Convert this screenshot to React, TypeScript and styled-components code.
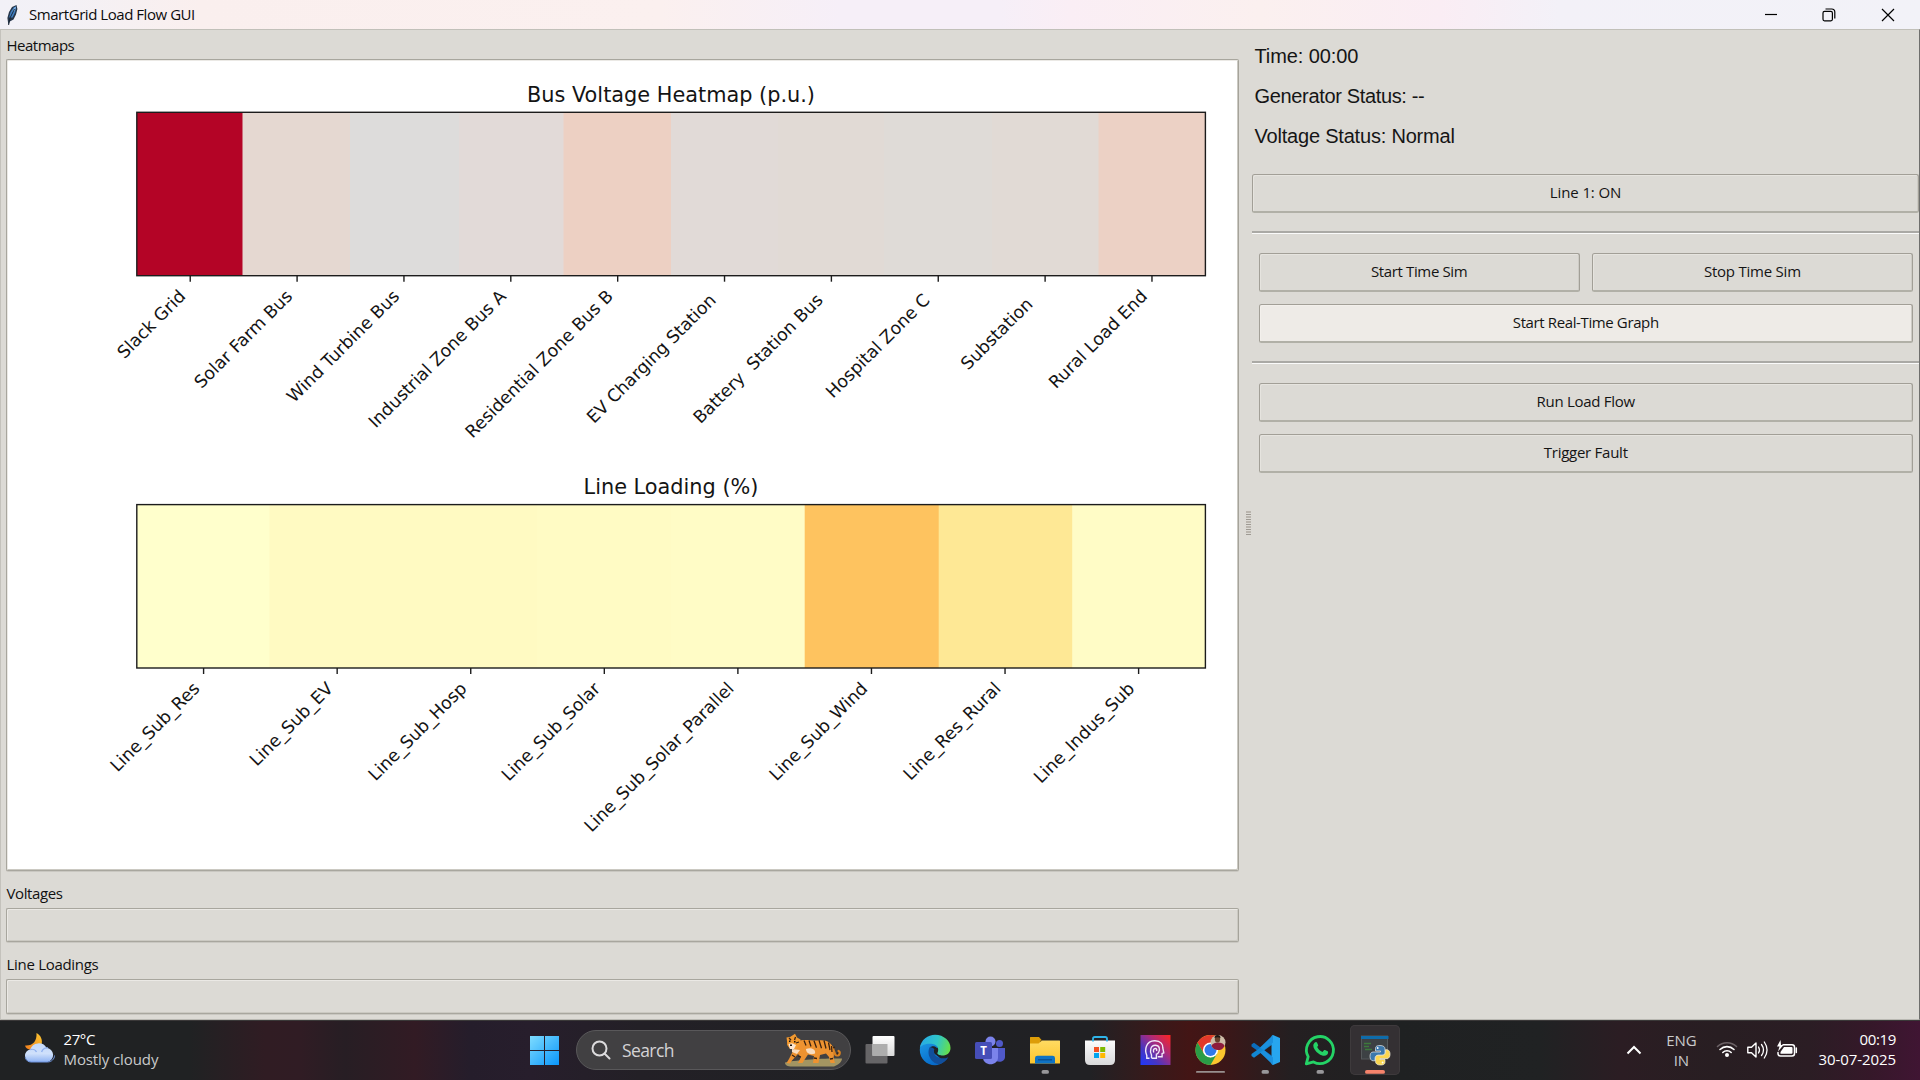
import React from "react";
import styled, { createGlobalStyle } from "styled-components";

const UI = '"Open Sans", "Noto Sans", sans-serif';
const FACE = "#dcdad5";

const Global = createGlobalStyle`
  * { box-sizing: border-box; }
  html, body { margin: 0; padding: 0; overflow: hidden; background: ${FACE}; }
`;

const Screen = styled.div`
  width: 1920px;
  height: 1080px;
  display: flex;
  flex-direction: column;
  overflow: hidden;
  font-family: ${UI};
  font-size: 15px;
  color: #111;
`;

const Text = styled.span<{ $track?: number }>`
  letter-spacing: ${(p) => p.$track ?? 0}px;
  white-space: pre;
`;

/* ---------- title bar ---------- */
const TitleBar = styled.header`
  height: 29px;
  flex: none;
  display: flex;
  align-items: center;
  line-height: 29px;
  padding-left: 6px;
  color: #0c0c0c;
  background: linear-gradient(90deg, #f2f1f7 0, #f3f1f6 60px, #faefee 200px, #fbf0ef 660px, #f6eff8 840px, #f6eff8 1000px, #faeef5 1070px, #fbf0ef 1260px, #faedf4 1440px, #f3f1f8 1560px, #f2f2f8 1920px);
`;
const TitleText = styled(Text)`
  margin-left: 9px;
`;
const Caption = styled.div`
  margin-left: auto;
  height: 29px;
  display: grid;
  grid-template-columns: repeat(3, 58.5px);
  place-items: center;
  padding-right: 3px;
`;

/* ---------- window body ---------- */
const Body = styled.main`
  height: 991px;
  flex: none;
  display: flex;
  background: ${FACE};
  border-top: 1px solid #c1c0b9;
  border-left: 1px solid #c4c2bc;
  border-right: 1px solid #6f6f6d;
  border-bottom: 1px solid #b9b8b2;
`;
const Plots = styled.section`
  width: 1238px;
  padding-left: 5px;
  display: flex;
  flex-direction: column;
`;
const GroupLabel = styled.div<{ $h: number; $lh: number }>`
  height: ${(p) => p.$h}px;
  line-height: ${(p) => p.$lh}px;
  padding-left: 0.5px;
  flex: none;
`;
const Frame = styled.div<{ $h: number; $fill?: string }>`
  height: ${(p) => p.$h}px;
  flex: none;
  background: ${(p) => p.$fill ?? FACE};
  border: 1px solid #a8a69e;
  border-right-color: #a5a39b;
  border-radius: 2px;
  box-shadow: inset 1px 1px 0 #ebe9e5, inset -1px -1px 0 #cbc9c2, 0 1px 0 #c9c7c1;
`;
const Sash = styled.div`
  width: 13px;
  padding-left: 7px;
`;
const Grip = styled.i`
  display: block;
  width: 5px;
  height: 25px;
  margin-top: 481px;
  background: repeating-linear-gradient(180deg, #bab5ae 0 2px, ${FACE} 2px 3px, #9e9a93 3px 4px, ${FACE} 4px 5px);
`;

/* ---------- control panel ---------- */
const Controls = styled.section`
  flex: 1;
  display: flex;
  flex-direction: column;
  padding-top: 6px;
`;
const Status = styled.div`
  height: 40px;
  line-height: 40px;
  padding-left: 2.5px;
  font-family: "Liberation Sans", Arial, sans-serif;
  font-size: 20px;
  color: #151515;
`;
const Button = styled.button<{ $active?: boolean }>`
  flex: 1;
  height: 39px;
  padding: 0 0 2px;
  border: 1px solid #a29f97;
  border-bottom: 2px solid #b1b0a7;
  border-radius: 2.5px;
  background: ${(p) => (p.$active ? "#eeebe7" : FACE)};
  box-shadow: inset 1px 1px 0 ${(p) => (p.$active ? "#f3f0ec" : "#e6e4df")}, inset -1px 0 0 #cdcbc5;
  font: 15px/34px ${UI};
  color: #141414;
`;
const ButtonRow = styled.div<{ $inset?: boolean; $top: number }>`
  display: flex;
  gap: 12px;
  margin-top: ${(p) => p.$top}px;
  padding: ${(p) => (p.$inset ? "0 6px 0 6.5px" : "0")};
`;
const Rule = styled.hr`
  width: 100%;
  height: 3px;
  margin: 18px 0 0;
  border: 0;
  border-top: 2px solid #aaa9a5;
  border-bottom: 1px solid #fafafa;
`;

/* ---------- taskbar ---------- */
const Taskbar = styled.footer`
  height: 60px;
  flex: none;
  display: grid;
  grid-template-columns: 517.5px 56.5px 278px 1fr auto;
  border-top: 1px solid #3a3838;
  color: #fff;
  background: linear-gradient(90deg, #202223 0, #202223 190px, #301c23 265px, #301c24 300px, #271e24 345px, #321b24 415px, #251d2b 470px, #271e2c 530px, #232026 640px, #202124 850px, #212124 1090px, #371a1b 1150px, #431515 1190px, #3b1718 1225px, #241f21 1290px, #1f2122 1400px, #202223 1540px, #2b1d23 1620px, #281e22 1720px, #2b1d24 1810px, #351829 1870px, #401533 1920px);
`;
const Weather = styled.div`
  display: flex;
  gap: 8px;
  padding: 11px 0 0 22.5px;
`;
const Lines = styled.div<{ $align?: string }>`
  display: flex;
  flex-direction: column;
  text-align: ${(p) => p.$align ?? "left"};
  line-height: 20px;
  margin-top: -3px;
`;
const Muted = styled(Text)`
  color: #c9cacb;
`;
const Slot = styled.div<{ $lit?: boolean }>`
  width: 50px;
  height: 50px;
  margin: 4px 2.5px 0;
  border-radius: 5px;
  background: ${(p) => (p.$lit ? "#343033" : "transparent")};
  box-shadow: ${(p) => (p.$lit ? "inset 0 0 0 1px #3e3a3c" : "none")};
  svg { display: block; }
`;
const SearchBox = styled.div`
  width: 275px;
  height: 40px;
  margin: 9px 0 0 2px;
  padding: 0 6px 0 13.5px;
  display: flex;
  align-items: center;
  border-radius: 20px;
  border: 1px solid #59585a;
  background: #414042;
  font-size: 17.5px;
  color: #d4d3d5;
`;
const SearchText = styled(Text)`
  margin-left: 11.5px;
  flex: 1;
`;
const Apps = styled.div`
  display: flex;
`;
const Tray = styled.div`
  display: flex;
  padding-right: 24px;
`;
const TrayIcons = styled.div`
  padding-top: 11px;
  width: 119px;
`;
const Clock = styled.div`
  padding-top: 11px;
`;
const Lang = styled(Lines)`
  width: 36px;
  margin-top: 9px;
`;

/* ---------- data ---------- */
const NB = "\u00a0";
const buses: [string, string][] = [
  ["Slack Grid", "#b40426"],
  ["Solar Farm Bus", "#e5d8d1"],
  ["Wind Turbine Bus", "#dddcdb"],
  ["Industrial Zone Bus A", "#e2dad8"],
  ["Residential Zone Bus B", "#edd0c3"],
  ["EV Charging Station" + NB, "#e1dad7"],
  ["Battery" + NB + NB + "Station Bus" + NB, "#e1dad5"],
  ["Hospital Zone C" + NB, "#dfdbd7"],
  ["Substation" + NB + NB, "#e1dad5"],
  ["Rural Load End", "#ecd1c5"],
];
const lines: [string, string][] = [
  ["Line_Sub_Res", "#ffffcc"],
  ["Line_Sub_EV", "#fffac2"],
  ["Line_Sub_Hosp", "#fffac2"],
  ["Line_Sub_Solar", "#fffbc4"],
  ["Line_Sub_Solar_Parallel", "#fffcc6"],
  ["Line_Sub_Wind", "#fec35f"],
  ["Line_Res_Rural", "#fee895"],
  ["Line_Indus_Sub", "#fffcc6"],
];

const X0 = 136.8;
const X1 = 1205.4;

interface AxesProps {
  title: string;
  titleY: number;
  cells: [string, string][];
  edges: number[];
  top: number;
  labelDx: number;
}

function Axes({ title, titleY, cells, edges, top, labelDx }: AxesProps) {
  const h = 163.4;
  const w = (X1 - X0) / cells.length;
  return (
    <g fontFamily='"DejaVu Sans", sans-serif' fill="#141414">
      <text x={671} y={titleY} fontSize="20.83" textAnchor="middle">{title}</text>
      {cells.map(([name, color], i) => (
        <rect key={name} x={edges[i]} y={top} width={X1 - edges[i]} height={h} fill={color} />
      ))}
      <rect x={X0} y={top} width={X1 - X0} height={h} fill="none" stroke="#1c1c1c" strokeWidth="1.4" />
      {cells.map(([name], i) => {
        const cx = X0 + (i + 0.5) * w;
        return (
          <g key={name}>
            <path d={`M${cx} ${top + h}v6`} stroke="#1c1c1c" strokeWidth="1.4" />
            <text fontSize="17.36" textAnchor="end" transform={`translate(${cx - labelDx} ${top + h + 21.6}) rotate(-45)`}>{name}</text>
          </g>
        );
      })}
    </g>
  );
}

const Figure = () => (
  <svg width="1230" height="808" viewBox="7 60 1230 808" style={{ display: "block" }}>
    <Axes title="Bus Voltage Heatmap (p.u.)" titleY={101.7} cells={buses} top={112.3} labelDx={3.6}
      edges={[137, 242.5, 350, 459, 563.5, 671, 778, 884, 992, 1098.5]} />
    <Axes title="Line Loading (%)" titleY={493.6} cells={lines} top={504.6} labelDx={3}
      edges={[137, 269.5, 404, 537, 671, 804.7, 938.7, 1072.2]} />
  </svg>
);

/* ---------- icons ---------- */
const Feather = () => (
  <svg width="14" height="22" viewBox="0 0 14 22">
    <path d="M2.400 21 1.400 14 3 8 6 3 10.500 1 11.400 5 10 10.500 7.500 15.500 3.800 17.500z" fill="#26364a" />
    <path d="M3.200 13.500 4.600 8 7.600 3.400 10.200 2.200 9.200 8 6.500 13.600z" fill="#4180c4" />
    <path d="M6.500 7.500 8.600 3.600 10.100 2.800 8.500 7z" fill="#8fbce8" />
    <path d="M2.600 21 4 14 8.500 5" stroke="#14202e" strokeWidth=".9" fill="none" />
  </svg>
);

const WeatherIcon = () => (
  <svg width="33" height="32" viewBox="0 0 33 32">
    <defs>
      <linearGradient id="moon" x1="0" y1="1" x2="1" y2="0"><stop offset="0" stopColor="#f27c1c" /><stop offset="1" stopColor="#fbc932" /></linearGradient>
      <linearGradient id="cloud" x1="0" y1="0" x2="0" y2="1"><stop offset="0" stopColor="#c4d9fa" /><stop offset=".55" stopColor="#cfe0fb" /><stop offset="1" stopColor="#8fb3f3" /></linearGradient>
    </defs>
    <path d="M13.500 1C18 3.500 20 8 18.400 13.500 17 18 10 19.500 5 17 3 16 2 14.500 2.200 13.500 10 14 14 9 13.500 1z" fill="url(#moon)" />
    <path d="M8 30a6.300 6.300 0 0 1-.8-12.500A9 9 0 0 1 23.500 15.800 7.200 7.200 0 0 1 24.500 30z" fill="url(#cloud)" />
    <path d="M7.200 17.500c3-.8 5.500.8 6.300 2.500M18.600 20c1-2.800 3.600-4.500 6.400-4.100" stroke="#8fb0ee" strokeWidth="1.300" fill="none" />
    <path d="M2.300 25.500C3 28.500 5.500 30 8 30h16.500c4 0 7-3 7-6.500" stroke="#7096e0" strokeWidth="1" fill="none" />
  </svg>
);

const Tiger = () => (
  <svg width="60" height="36" viewBox="0 0 60 36">
    <path d="M1 30.500C10 28 40 26 58 26.500 58 30 54 33 50 34.500H8C3 34.500 1 33 1 30.500z" fill="#a39562" />
    <path d="M47 14c5 4 2 9 6 9.500 3 0 3.500-3.500 1.500-4.500" stroke="#d9801f" strokeWidth="2.200" fill="none" strokeLinecap="round" />
    <path d="M14 9C20 7 28 9 34 8.500 42 7 48 11 49 16 49.500 20 50.500 23 49.500 26L51 31H46.500L45 25 42 21.500 36 23 34.500 31H29L30 24 24 22.500 21 27 18.500 31H14L17 25 14 22 8 28.500 6 31.500 2.500 31 5 27 9 19z" fill="#ee9230" />
    <path d="M22 17C28 15 32 18 31 21.500 26 23.500 22 21 22 17zM8 17 16 18 13 22 8 20z" fill="#f8dcc0" />
    <path d="M2.500 5.500 6 5 11 1.800 13 5.500 16.500 7.500 15.500 13 12 17 6 17 3.200 13 3 9z" fill="#f39a30" />
    <path d="M4.500 12 8 11.200 12 13 10 17 6 17z" fill="#fbe6d2" />
    <g stroke="#3a2210" strokeWidth="1.300" fill="none">
      <path d="M20 8.500l2 5M25 8.500l2 6M30 8.700l2.500 7M35 8.300l2.500 8M40 8.500l2 8M44.500 10.500l1.500 7.500M47.500 14l.5 6M5 6l2 2M11.500 5l-1 3M15 10l-3 1M14 24l3 1M30 26l3 .5M46 27l3-.5M53 22.500l1-2M8 23l3 2M49 16l2-1" />
    </g>
    <path d="M5 9.200h1.500M10 9.700h1.500M6 13.200h2" stroke="#1b120c" strokeWidth="1.500" />
  </svg>
);

const Sq = ({ children }: { children: React.ReactNode }) => (
  <svg width="50" height="50" viewBox="0 0 50 50">{children}</svg>
);

const Start = () => (
  <Sq>
    <defs><linearGradient id="win" x1="0" y1="0" x2="1" y2="1"><stop offset="0" stopColor="#7edcff" /><stop offset="1" stopColor="#0a96fb" /></linearGradient></defs>
    <path d="M10 11h14v14H10zM25 11h14v14H25zM10 26h14v14H10zM25 26h14v14H25z" fill="url(#win)" />
  </Sq>
);
const TaskView = () => (
  <Sq>
    <defs><linearGradient id="tv" x2="0" y2="1"><stop stopColor="#fff" /><stop offset="1" stopColor="#d9d9d9" /></linearGradient></defs>
    <rect x="10.500" y="19" width="22" height="19.500" rx="1" fill="#666567" />
    <rect x="17.500" y="11" width="22" height="20" rx="1" fill="url(#tv)" />
    <path d="M17.500 19h15v12h-15z" fill="#adadad" />
  </Sq>
);
const Edge = () => (
  <Sq>
    <defs>
      <linearGradient id="e1" x1="0" y1=".3" x2="1" y2=".5"><stop stopColor="#27a9e8" /><stop offset=".55" stopColor="#2fc6c8" /><stop offset="1" stopColor="#65df4c" /></linearGradient>
      <linearGradient id="e2" x1="0" y1="0" x2=".6" y2="1"><stop stopColor="#1e9ce6" /><stop offset="1" stopColor="#0669c9" /></linearGradient>
    </defs>
    <path d="M9.800 25C10 16 17 13 24 15.500L28 22 24 28 34 36.500C31 39 28 40.200 25 40.200 16.500 40.200 9.800 33.500 9.800 25z" fill="url(#e2)" />
    <path d="M9.800 23C11 14.500 18 9.700 25 9.700c9 0 15.500 6.500 15.500 13.300 0 5-3.800 7.500-8 7.500-3.800 0-6-1.300-5-3 1.800-3 .3-7.500-4.800-8.500C17.500 18 11.500 19.500 9.800 23z" fill="url(#e1)" />
    <path d="M19.500 22.500c-3.500 8 3 16.500 10 16.700 4-1.200 7.200-3.900 8.800-7-5.500 2.500-13 1-14.300-4.500-.3-1.700.2-3 1.200-4.200-2-2.500-4.500-2.500-5.700-1z" fill="#114f9c" />
    <path d="M20.500 22.500c2.500-2.500 6.500-1 7.200 2 .2 1.300-.2 2.300-.5 3-.7 1.500 1.500 2.800 4.300 3-3 1-7-.5-7.500-3.500-.2-1.200 0-2 .3-2.800-1-1.500-2.500-2-3.800-1.700z" fill="#202124" />
  </Sq>
);
const Teams = () => (
  <Sq>
    <circle cx="25.500" cy="16.500" r="5" fill="#7b83eb" />
    <circle cx="34.500" cy="18.500" r="3.500" fill="#5059c9" />
    <path d="M31 23h9v9c0 4-5 6-9 4z" fill="#5059c9" />
    <path d="M18 23h15v9.500c0 9-15 9-15 0z" fill="#7b83eb" />
    <rect x="10" y="17" width="17" height="17" rx="1.500" fill="#464eb8" />
    <text x="18.500" y="29.500" fontSize="11.500" fontWeight="700" fontFamily="Open Sans, sans-serif" fill="#fff" textAnchor="middle">T</text>
  </Sq>
);
const Explorer = () => (
  <Sq>
    <defs><linearGradient id="fo" x2="0" y2="1"><stop stopColor="#ffdb62" /><stop offset="1" stopColor="#fcc52e" /></linearGradient></defs>
    <path d="M10 12.500q0-.5.500-.5h8.500l3 3.500h-1.500v5H10z" fill="#dd9d08" />
    <path d="M10 18.500h8.500l3.500-3H39.500q.5 0 .5.500V38q0 .5-.5.500h-29q-.5 0-.5-.5z" fill="url(#fo)" />
    <path d="M15 38.500V33q0-2.300 2.500-2.300h15Q35 30.700 35 33v5.500z" fill="#0f73c4" />
    <path d="M18 34.800h14" stroke="#0a4c8c" strokeWidth="1.200" />
    <rect x="21.500" y="45" width="7.500" height="3.800" rx="1.900" fill="#98979a" />
  </Sq>
);
const Store = () => (
  <Sq>
    <defs><linearGradient id="st" x2="0" y2="1"><stop stopColor="#fcfcfc" /><stop offset="1" stopColor="#d9d9da" /></linearGradient></defs>
    <path d="M10 15.500h30V35q0 5-5 5H15q-5 0-5-5z" fill="url(#st)" />
    <path d="M18 16.500v-2.700q0-1.800 1.800-1.800h10.400q1.800 0 1.800 1.800v2.700" stroke="#2fb4e9" strokeWidth="1.800" fill="none" />
    <path d="M19 22h5v5h-5z" fill="#f25022" /><path d="M25.200 22h5v5h-5z" fill="#7fba00" />
    <path d="M19 28h5v5h-5z" fill="#00a4ef" /><path d="M25.200 28h5v5h-5z" fill="#ffb900" />
  </Sq>
);
const HeadApp = () => (
  <Sq>
    <defs><linearGradient id="hd" x1="0" y1="1" x2="1" y2="0"><stop stopColor="#1d38fc" /><stop offset=".3" stopColor="#4536c4" /><stop offset=".62" stopColor="#a82b7e" /><stop offset="1" stopColor="#ff2420" /></linearGradient></defs>
    <rect x="10.500" y="10" width="30" height="30" fill="url(#hd)" />
    <path d="M19.500 33.300h-2.700V30.500c-2.500-6-.8-14.500 7.700-14.700 6.500-.2 8.700 4 8.300 7.200l1 4.800-1.700.7v3.200h-4.300M21.500 33v-3c-2-4-1-9.700 3.700-9.700 4.500 0 5 4 3.500 7-.7 1.400-1.700 1.800-2.300 1.800V33.300h-4.900M23.800 27.500c-.8-2-.3-4 1.500-4 1.300 0 1.700 1.200 1.200 2.500" stroke="#f1e8f8" strokeWidth="1.400" fill="none" />
  </Sq>
);
const Chrome = () => (
  <Sq>
    <circle cx="25.500" cy="25" r="15" fill="#fbc62e" />
    <path d="M12.500 17.500A15 15 0 0 1 38.500 17.500H25.500L19 28.700z" fill="#e2392b" />
    <path d="M12.500 17.500A15 15 0 0 0 25.500 40L32 28.700 25.500 32.500 19 28.700z" fill="#2a9c47" />
    <circle cx="25.500" cy="25" r="7.600" fill="#fff" /><circle cx="25.500" cy="25" r="6" fill="#3079ea" />
    <circle cx="33" cy="17.500" r="7.500" fill="#cdbda8" />
    <path d="M26.500 21c1-4 11-5 13 0-2 4-4 4-6.500 4-3 0-5-1.500-6.500-4z" fill="#8d1d3c" />
    <ellipse cx="32.500" cy="14" rx="2.700" ry="3.500" fill="#67402c" />
    <path d="M29.500 13q0-3 3-3t3 3q-3-1.500-6 0z" fill="#1d1512" />
    <rect x="11" y="46" width="29" height="1.800" rx=".9" fill="#98908f" />
  </Sq>
);
const Code = () => (
  <Sq>
    <path d="M11.500 19.500 14 17.800 35 33V38L11.500 21.500z" fill="#0b6dbb" />
    <path d="M11.500 31 14 32.800 35 17.500V12L11.500 29z" fill="#1287d3" />
    <path d="M33 10 40 13V37L33 40 31.500 39V11z" fill="#27a6ef" />
    <path d="M33 10 20 22.500 23.500 25.300 33 17.500zM33 40 20 27.500 23.500 24.700 33 32.500z" fill="#1b90de" />
    <rect x="21.500" y="45" width="7.500" height="3.800" rx="1.900" fill="#98979a" />
  </Sq>
);
const WhatsApp = () => (
  <Sq>
    <path d="M11.300 38.800 13.200 31.700A13.500 13.500 0 1 1 18.500 36.900z" fill="none" stroke="#24d366" strokeWidth="2.800" strokeLinejoin="round" />
    <path d="M19.800 17.500c.8-.8 1.900-.7 2.300.2l1 2.400c.2.500 0 .9-.9 2 .9 2.300 2.900 4 5.200 5l1.600-1.900c.3-.3.700-.4 1-.2l2.600 1.300c.9.500.5 2.300-.3 3.200-2 2-5.200 1.500-8.500-.8-3.300-2.300-5.500-5.500-5.500-8 0-1.200.6-2.300 1.500-3.200z" fill="#24d366" />
    <rect x="21.500" y="45" width="7.500" height="3.800" rx="1.900" fill="#98979a" />
  </Sq>
);
const Python = () => (
  <Sq>
    <rect x="11.500" y="11" width="26" height="23" fill="#3d4144" stroke="#55595b" />
    <path d="M11 11h27.500v3H11z" fill="#0e6cab" />
    <path d="M14 18.500h7M14 21.500h5M15 24.500h7" stroke="#3d7a3b" strokeWidth="1.300" />
    <path d="M30 20.500c-4.600 0-4.500 2-4.500 3.500v2h5v1h-7.500c-2.500 0-3 2.500-3 4.500s1 4.300 3 4.300h2v-2.300c0-2 1.500-3.200 3.500-3.200h4c1.500 0 2.500-1 2.500-2.500V24c0-2-1.500-3.500-5-3.500z" fill="#3b78ac" stroke="#e6e8ea" strokeWidth=".7" />
    <path d="M30.500 40c4.600 0 4.500-2 4.500-3.500v-2h-5v-1h7c2.500 0 3-2.500 3-4.500s-1-4.300-3-4.300h-1.500V27c0 2-1.500 3.200-3.500 3.200h-4c-1.500 0-2.500 1-2.500 2.500v3.800c0 2 1.500 3.500 5 3.500z" fill="#fbd650" stroke="#f3f0e0" strokeWidth=".7" />
    <circle cx="27.700" cy="23" r=".9" fill="#fff" /><circle cx="32.600" cy="37.500" r=".9" fill="#fff" />
    <rect x="15" y="45" width="20" height="3.800" rx="1.900" fill="#f5836b" />
  </Sq>
);

const TrayGlyphs = () => (
  <svg width="110" height="34" viewBox="1700 1032 110 34">
    <g fill="none" stroke="#fff" strokeWidth="1.600" strokeLinecap="round">
      <path d="M1718.500 1046.500a14 14 0 0 1 19 0" stroke="#6c6266" />
      <path d="M1721 1049.500a10 10 0 0 1 14 0M1723.800 1052.500a6 6 0 0 1 8.400 0" />
      <path d="M1748.800 1047.300h3.700l4.500-4.300v14l-4.500-4.300h-3.700z" strokeLinejoin="round" strokeWidth="1.400" />
      <path d="M1759.500 1047q2 3 0 6M1762.500 1044.500q4 5.500 0 11M1765.300 1042q5.500 8 0 16" strokeWidth="1.300" />
      <path d="M1784 1044.700h9q2.500 0 2.500 2.500v6.300q0 2.500-2.500 2.500h-11.500q-2.500 0-2.500-2.500v-1" strokeWidth="1.500" />
      <path d="M1797.300 1048v4.500" strokeWidth="1.500" />
    </g>
    <circle cx="1728" cy="1055" r="2" fill="#fff" />
    <path d="M1785 1047h7.500q1 0 1 1v4.700q0 1-1 1h-11v-1.700zM1781.500 1040 1778 1046.500h2.500l-1.500 5 5.500-6.500h-2.500z" fill="#fff" />
  </svg>
);

export default function App() {
  return (
    <Screen>
      <Global />
      <TitleBar>
        <Feather />
        <TitleText $track={-0.45}>SmartGrid Load Flow GUI</TitleText>
        <Caption>
          <svg width="14" height="14" viewBox="0 0 14 14"><path d="M1 6.500h12" stroke="#000" strokeWidth="1.200" /></svg>
          <svg width="14" height="14" viewBox="0 0 14 14" fill="none" stroke="#000" strokeWidth="1.200">
            <rect x="1" y="3.400" width="9.400" height="9.400" rx="1.500" />
            <path d="M3.500 1h6.200q3.100 0 3.100 3.100V10.500" />
          </svg>
          <svg width="14" height="14" viewBox="0 0 14 14"><path d="M1 1l12 12M13 1 1 13" stroke="#000" strokeWidth="1.200" /></svg>
        </Caption>
      </TitleBar>

      <Body>
        <Plots>
          <GroupLabel $h={29} $lh={30}><Text $track={-0.5}>Heatmaps</Text></GroupLabel>
          <Frame $h={812} $fill="#fff"><Figure /></Frame>
          <GroupLabel $h={37} $lh={44}><Text $track={-0.4}>Voltages</Text></GroupLabel>
          <Frame $h={34} />
          <GroupLabel $h={37} $lh={45}><Text $track={-0.3}>Line Loadings</Text></GroupLabel>
          <Frame $h={35} />
        </Plots>
        <Sash><Grip /></Sash>
        <Controls>
          <Status><Text $track={-0.1}>Time: 00:00</Text></Status>
          <Status><Text $track={-0.34}>Generator Status: --</Text></Status>
          <Status><Text $track={-0.2}>Voltage Status: Normal</Text></Status>
          <ButtonRow $top={18}><Button><Text $track={-0.12}>Line 1: ON</Text></Button></ButtonRow>
          <Rule />
          <ButtonRow $inset $top={19}>
            <Button><Text $track={-0.36}>Start Time Sim</Text></Button>
            <Button><Text $track={-0.22}>Stop Time Sim</Text></Button>
          </ButtonRow>
          <ButtonRow $inset $top={12}><Button $active><Text $track={-0.38}>Start Real-Time Graph</Text></Button></ButtonRow>
          <Rule />
          <ButtonRow $inset $top={19}><Button><Text $track={-0.28}>Run Load Flow</Text></Button></ButtonRow>
          <ButtonRow $inset $top={12}><Button><Text $track={-0.26}>Trigger Fault</Text></Button></ButtonRow>
        </Controls>
      </Body>

      <Taskbar>
        <Weather>
          <WeatherIcon />
          <Lines>
            <Text $track={-0.4}>27°C</Text>
            <Muted $track={-0.1}>Mostly cloudy</Muted>
          </Lines>
        </Weather>
        <Slot><Start /></Slot>
        <SearchBox>
          <svg width="20" height="20" viewBox="0 0 20 20" fill="none" stroke="#dcdbdd" strokeWidth="2"><circle cx="8.500" cy="8.500" r="7" /><path d="M13.500 13.500l5 5" strokeLinecap="round" /></svg>
          <SearchText $track={-0.6}>Search</SearchText>
          <Tiger />
        </SearchBox>
        <Apps>
          <Slot><TaskView /></Slot>
          <Slot><Edge /></Slot>
          <Slot><Teams /></Slot>
          <Slot><Explorer /></Slot>
          <Slot><Store /></Slot>
          <Slot><HeadApp /></Slot>
          <Slot><Chrome /></Slot>
          <Slot><Code /></Slot>
          <Slot><WhatsApp /></Slot>
          <Slot $lit><Python /></Slot>
        </Apps>
        <Tray>
          <svg width="40" height="59" viewBox="1622 1021 40 59" fill="none" stroke="#fff" strokeWidth="2"><path d="M1626.500 1053.500l6.500-6.500 6.500 6.500" /></svg>
          <Lang $align="center"><Muted>ENG</Muted><Muted>IN</Muted></Lang>
          <TrayIcons><TrayGlyphs /></TrayIcons>
          <Clock>
            <Lines $align="right"><Text $track={-0.35}>00:19</Text><Text $track={-0.07}>30-07-2025</Text></Lines>
          </Clock>
        </Tray>
      </Taskbar>
    </Screen>
  );
}
